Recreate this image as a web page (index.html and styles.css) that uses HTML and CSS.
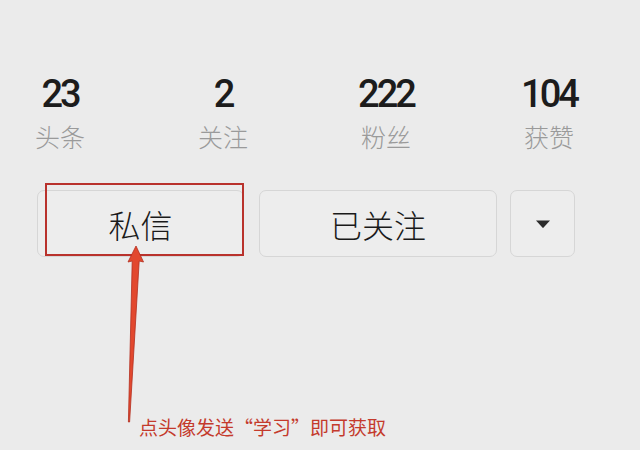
FILE: index.html
```html
<!DOCTYPE html>
<html lang="zh-CN">

<head>
    <meta charset="UTF-8">
    <meta name="viewport" content="width=device-width, initial-scale=1.0">
    <title>个人主页</title>
    <link rel="stylesheet" href="styles.css">
</head>

<body>
    <main class="page">
        <!-- 数据统计 -->
        <section class="stats">
            <div class="stat">
                <p class="stat-num">23</p>
                <p class="stat-label">头条</p>
            </div>
            <div class="stat">
                <p class="stat-num">2</p>
                <p class="stat-label">关注</p>
            </div>
            <div class="stat">
                <p class="stat-num">222</p>
                <p class="stat-label">粉丝</p>
            </div>
            <div class="stat">
                <p class="stat-num">104</p>
                <p class="stat-label">获赞</p>
            </div>
        </section>

        <!-- 操作按钮 -->
        <section class="actions">
            <button class="btn btn-msg">私信</button>
            <button class="btn btn-follow">已关注</button>
            <button class="btn btn-more">
                <svg width="16" height="10" viewBox="0 0 16 10">
                    <path d="M1 1.5 L15 1.5 L8.6 8.6 Q8 9.2 7.4 8.6 Z" fill="#2b2b2b"/>
                </svg>
            </button>
            <div class="mark-box"></div>
        </section>

        <!-- 标注箭头 -->
        <svg class="mark-arrow" width="30" height="190" viewBox="0 0 30 190">
            <path d="M18 6 L25.5 22 L21.2 21 L11.6 182 L10.4 182 L14.2 21 L10 22 Z"
                fill="#e2482e" stroke="#b22d1e" stroke-width="0.8" stroke-linejoin="round"/>
        </svg>
        <p class="hint">点头像发送“学习”即可获取</p>
    </main>
</body>

</html>
```

FILE: styles.css
```css
* {
    box-sizing: border-box;
}

body {
    margin: 0;
    padding: 0;
    background-color: #ebebeb;
    font-family: "Noto Sans CJK SC", "Noto Sans", sans-serif;
}

p {
    margin: 0;
}

.page {
    position: relative;
    height: 450px;
    padding-top: 75px;
}

.stats {
    display: grid;
    grid-template-columns: repeat(4, 120px);
    column-gap: 43px;
}

.stat {
    display: flex;
    flex-direction: column;
    align-items: center;
}

.stat-num {
    font-family: Roboto, "Noto Sans", sans-serif;
    font-weight: 500;
    font-size: 38px;
    line-height: 38px;
    letter-spacing: -3px;
    color: #1c1c1c;
}

.stat-label {
    margin-top: 11px;
    font-size: 25px;
    line-height: 25px;
    font-weight: 300;
    color: #9a9a9a;
}

.actions {
    position: relative;
    display: flex;
    margin-top: 41px;
    padding-left: 37px;
}

.btn {
    height: 67px;
    border: 1.5px solid #d6d6d6;
    border-radius: 7px;
    background-color: #ededed;
    font-family: "Noto Sans CJK SC", sans-serif;
    font-size: 32px;
    font-weight: 300;
    color: #1a1a1a;
    display: flex;
    align-items: center;
    justify-content: center;
    padding: 0;
}

.btn-msg {
    width: 207px;
}

.btn-follow {
    width: 238px;
    margin-left: 15px;
}

.btn-more {
    width: 65px;
    margin-left: 13px;
}

/* 红色标注框 */
.mark-box {
    position: absolute;
    left: 45px;
    top: -7px;
    width: 199px;
    height: 73px;
    border: 2px solid #b9322c;
}

.mark-arrow {
    position: absolute;
    left: 118px;
    top: 240px;
}

.hint {
    margin-top: 159px;
    padding-left: 139px;
    font-size: 19px;
    line-height: 22px;
    color: #c43a2c;
}
```
